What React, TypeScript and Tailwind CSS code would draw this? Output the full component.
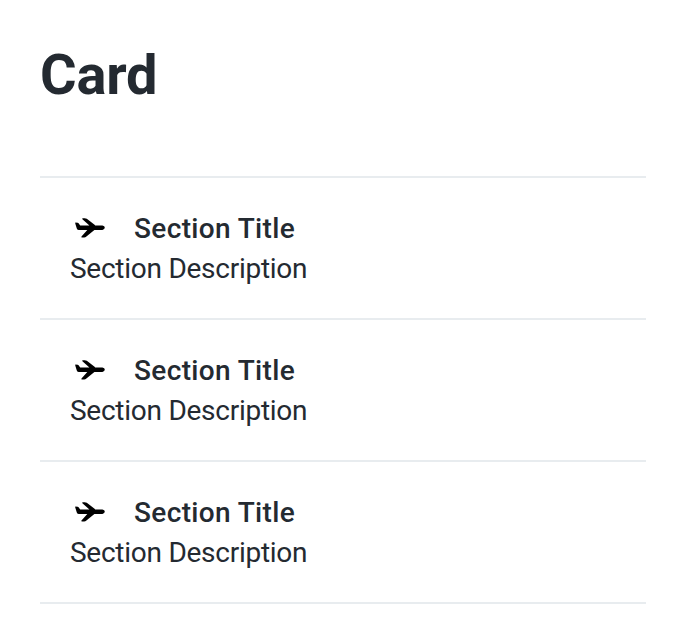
import React from "react";

function PlaneIcon() {
  return (
    <svg className="size-10 shrink-0" viewBox="0 0 40 40" fill="#000">
      <path d="M5.4 14.5L7.7 14.7Q8.2 14.8 8.6 15.2L10.2 17.4H19.4L12.4 11.3Q11.8 10.4 12.8 10.2H14.6Q15.8 10.2 16.8 10.8L24.6 16.8L25.2 17.4H32.4Q34.8 17.8 34.8 19.6Q34.8 21.6 32.4 22H24.4L16.4 28.6Q15.4 29.5 14.2 29.5H12Q10.8 29.3 11.5 28.4L17.3 22H9Q7.3 22 6.8 20.4L5.4 16Q5 14.8 5.4 14.5Z" />
    </svg>
  );
}

function Section() {
  return (
    <div className="h-[142px] border-b-2 border-[#e8ecef] px-[30px] pt-[30px]">
      <div className="flex h-10 items-center">
        <PlaneIcon />
        <div className="ml-6 pt-0.5 text-[28px] leading-10 font-medium tracking-[0.36px]">Section Title</div>
      </div>
      <div className="pt-px text-[28px] leading-10 tracking-[-0.26px]">Section Description</div>
    </div>
  );
}

export default function App() {
  return (
    <main className="h-[644px] bg-white px-10 pt-10 font-['Roboto',sans-serif] text-[#242a31]">
      <h1 className="h-[136px] text-[56px] leading-[70px] font-bold tracking-[-0.2px]">Card</h1>
      <div className="border-t-2 border-[#e8ecef]">
        <Section />
        <Section />
        <Section />
      </div>
    </main>
  );
}
